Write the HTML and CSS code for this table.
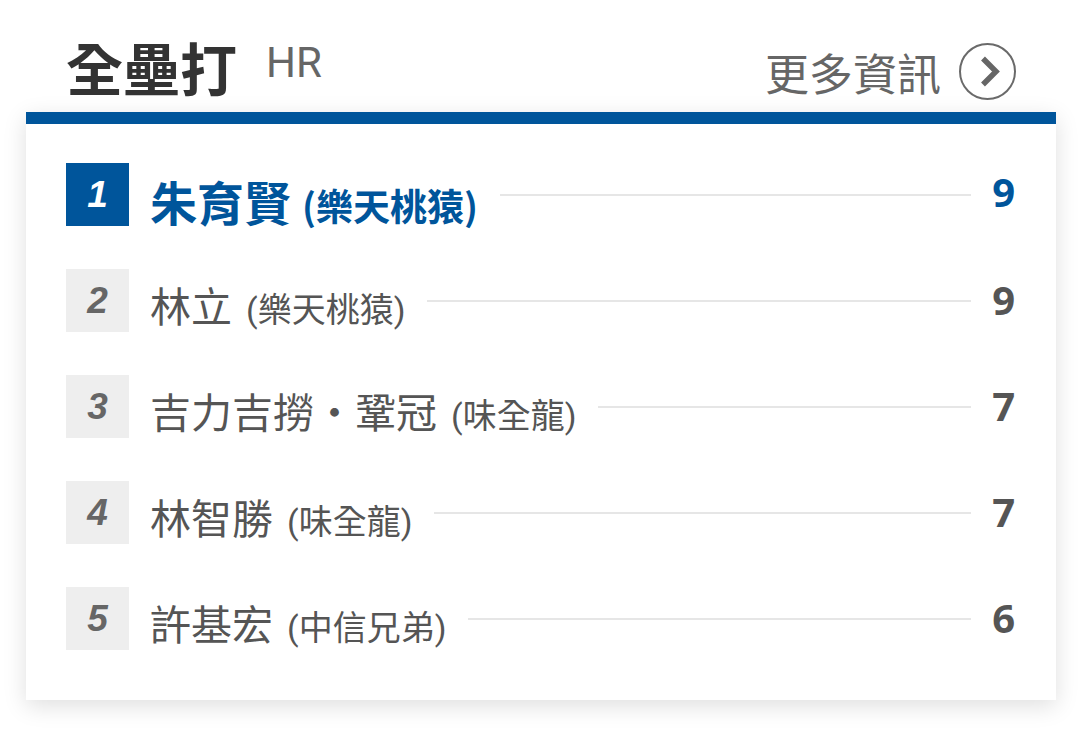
FILE: index.html
```html
<!DOCTYPE html>
<html lang="zh-Hant">
<head>
<meta charset="utf-8">
<title>全壘打 HR</title>
<link rel="stylesheet" href="styles.css">
</head>
<body>
<section class="widget">
  <header class="head">
    <div class="title">
      <h2 class="title-zh">全壘打</h2>
      <span class="title-en">HR</span>
    </div>
    <a class="more" href="#">
      <span class="more-text">更多資訊</span>
      <span class="more-icon">
        <svg width="53" height="53" viewBox="0 0 53 53" aria-hidden="true">
          <polyline points="22,13.5 35,26.5 22,39.5" fill="none" stroke="#666" stroke-width="5.5" stroke-linejoin="miter" stroke-linecap="butt"/>
        </svg>
      </span>
    </a>
  </header>
  <div class="card">
    <ol class="list">
      <li class="row first">
        <span class="rank">1</span>
        <span class="player"><span class="name">朱育賢</span><span class="team">(樂天桃猿)</span></span>
        <span class="rule"></span>
        <span class="value">9</span>
      </li>
      <li class="row">
        <span class="rank">2</span>
        <span class="player"><span class="name">林立</span><span class="team">(樂天桃猿)</span></span>
        <span class="rule"></span>
        <span class="value">9</span>
      </li>
      <li class="row">
        <span class="rank">3</span>
        <span class="player"><span class="name">吉力吉撈・鞏冠</span><span class="team">(味全龍)</span></span>
        <span class="rule"></span>
        <span class="value">7</span>
      </li>
      <li class="row">
        <span class="rank">4</span>
        <span class="player"><span class="name">林智勝</span><span class="team">(味全龍)</span></span>
        <span class="rule"></span>
        <span class="value">7</span>
      </li>
      <li class="row">
        <span class="rank">5</span>
        <span class="player"><span class="name">許基宏</span><span class="team">(中信兄弟)</span></span>
        <span class="rule"></span>
        <span class="value">6</span>
      </li>
    </ol>
  </div>
</section>
</body>
</html>
```

FILE: styles.css
```css
html, body {
  margin: 0;
  padding: 0;
  background: #ffffff;
}

body {
  font-family: "Noto Sans CJK TC", "Noto Sans", sans-serif;
  color: #555555;
  padding-bottom: 37px;
}

.widget {
  margin-left: 26px;
  width: 1030px;
}

.head {
  display: flex;
  justify-content: space-between;
  align-items: center;
  height: 73px;
  padding: 30px 40px 9px 40px;
}

.title {
  display: flex;
  align-items: center;
  gap: 29px;
}

.title-zh {
  margin: 0;
  font-size: 57px;
  line-height: 1;
  font-weight: 700;
  color: #333333;
}

.title-en {
  font-family: Roboto, "Noto Sans", sans-serif;
  font-size: 42px;
  line-height: 1;
  color: #666666;
  margin-top: -8px;
}

.more {
  display: flex;
  align-items: center;
  gap: 18px;
  text-decoration: none;
  margin-top: 10px;
}

.more-text {
  font-size: 44px;
  line-height: 1;
  color: #666666;
}

.more-icon {
  display: block;
  width: 53px;
  height: 53px;
  border: 2px solid #6a6a6a;
  border-radius: 50%;
}

.more-icon svg {
  display: block;
}

.card {
  background: #ffffff;
  border-top: 12px solid #00559b;
  box-shadow: 0 6px 22px rgba(0, 0, 0, 0.13);
  padding: 39px 41px 50px 40px;
}

.list {
  list-style: none;
  margin: 0;
  padding: 0;
  display: flex;
  flex-direction: column;
  gap: 43px;
}

.row {
  display: flex;
  align-items: center;
  height: 63px;
}

.rank {
  flex: none;
  width: 63px;
  height: 63px;
  display: flex;
  align-items: center;
  justify-content: center;
  background: #eeeeee;
  color: #666666;
  font-family: "Liberation Sans", Arial, sans-serif;
  font-style: italic;
  font-weight: 700;
  font-size: 37px;
}

.player {
  display: flex;
  align-items: baseline;
  margin-left: 21px;
  padding-top: 9px;
  white-space: nowrap;
}

.name {
  font-size: 41px;
  line-height: 1;
  color: #555555;
}

.team {
  font-family: Roboto, "Noto Sans CJK TC", sans-serif;
  font-size: 34px;
  line-height: 1;
  color: #555555;
  margin-left: 14px;
}

.rule {
  flex: 1;
  height: 2px;
  background: #e6e6e6;
  margin: 0 21px 0 22px;
}

.value {
  flex: none;
  font-family: "Open Sans", "Noto Sans", sans-serif;
  font-weight: 700;
  font-size: 40px;
  line-height: 1;
  color: #555555;
  margin-top: -2px;
}

.first .rank {
  background: #00559b;
  color: #ffffff;
}

.first .player {
  padding-top: 12px;
}

.first .name {
  font-size: 47px;
  font-weight: 700;
  color: #00559b;
}

.first .team {
  font-family: "Noto Sans CJK TC", sans-serif;
  font-size: 37px;
  font-weight: 700;
  color: #00559b;
  margin-left: 11px;
}

.first .value {
  color: #00559b;
  margin-top: -5px;
}
```
